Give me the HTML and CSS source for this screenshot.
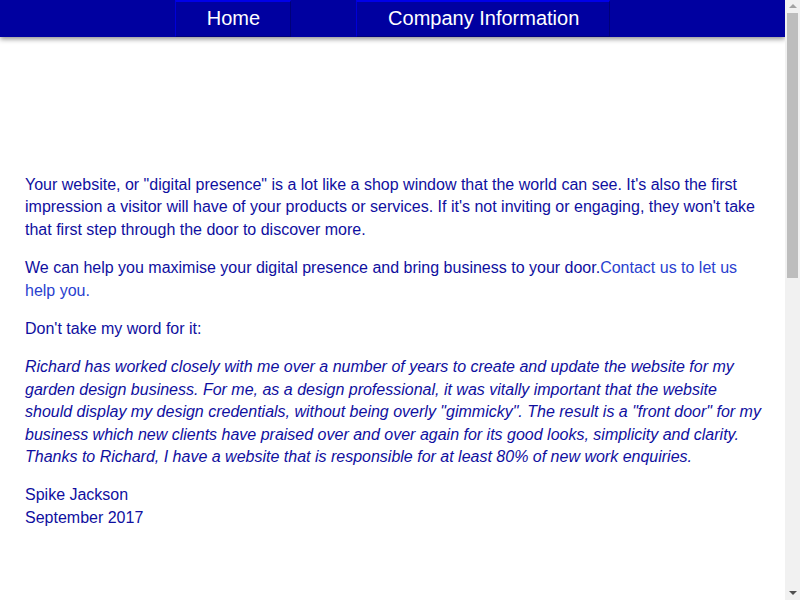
FILE: index.html
```html
<!DOCTYPE html>
<html lang="en">
<head>
<meta charset="utf-8">
<title>Digital presence</title>
<link rel="stylesheet" href="styles.css">
</head>
<body>
<header class="site-header">
  <nav class="nav">
    <a class="nav-item" href="#">Home</a>
    <a class="nav-item" href="#">Company Information</a>
  </nav>
</header>
<main class="content">
  <p>Your website, or "digital presence" is a lot like a shop window that the world can see. It's also the first impression a visitor will have of your products or services. If it's not inviting or engaging, they won't take that first step through the door to discover more.</p>
  <p>We can help you maximise your digital presence and bring business to your door.<a class="link" href="#">Contact us to let us help you.</a></p>
  <p>Don't take my word for it:</p>
  <p class="quote">Richard has worked closely with me over a number of years to create and update the website for my garden design business. For me, as a design professional, it was vitally important that the website should display my design credentials, without being overly "gimmicky". The result is a "front door" for my business which new clients have praised over and over again for its good looks, simplicity and clarity. Thanks to Richard, I have a website that is responsible for at least 80% of new work enquiries.</p>
  <p>Spike Jackson<br>September 2017</p>
</main>
<div class="scrollbar" aria-hidden="true">
  <span class="sb-arrow sb-up"></span>
  <span class="sb-track"><span class="sb-thumb"></span></span>
  <span class="sb-arrow sb-down"></span>
</div>
</body>
</html>
```
FILE: styles.css
```css
html, body {
  padding: 0;
  background: #ffffff;
}

html {
  margin: 0;
}

body {
  margin: 0 15px 0 0;
  font-family: "Liberation Sans", Arial, sans-serif;
  font-size: 16px;
  line-height: 1.4;
  color: #0f0fa0;
}

.site-header {
  height: 37px;
  background: #0000a0;
  box-shadow: 0 2px 5px rgba(0, 0, 0, 0.45);
  position: relative;
  z-index: 1;
}

.nav {
  display: flex;
  justify-content: center;
  height: 37px;
  gap: 65px;
}

.nav-item {
  display: flex;
  align-items: center;
  box-sizing: border-box;
  height: 37px;
  padding: 0 30px 2px 31px;
  color: #ffffff;
  font-size: 20px;
  line-height: 22px;
  text-decoration: none;
  background: #0000a0;
  border-top: 2px solid #0000e8;
  border-left: 1px solid #0000d8;
  border-right: 1px solid #000078;
  border-bottom: 1px solid #000080;
}

.content {
  box-sizing: border-box;
  min-height: 1253px;
  padding: 137px 22px 0 25px;
}

.content p {
  margin: 0 0 16px;
}

.quote {
  font-style: italic;
}

.link {
  color: #2a3fcf;
  text-decoration: none;
}

/* simulated classic browser scrollbar */
.scrollbar {
  position: fixed;
  top: 0;
  right: 0;
  bottom: 0;
  width: 15px;
  background: #f1f1f1;
  display: flex;
  flex-direction: column;
  z-index: 2;
}

.sb-arrow {
  height: 13px;
  flex: none;
  display: flex;
  justify-content: center;
  align-items: center;
}

.sb-arrow::before {
  content: "";
  width: 0;
  height: 0;
  border-left: 4px solid transparent;
  border-right: 4px solid transparent;
}

.sb-up::before {
  border-bottom: 4px solid #a3a3a3;
  margin-top: -2px;
}

.sb-down {
  height: 15px;
}

.sb-down::before {
  border-top: 4px solid #505050;
}

.sb-track {
  flex: 1;
  display: flex;
  flex-direction: column;
  padding: 0 2px;
}

.sb-thumb {
  height: 265px;
  background: #bdbdbd;
}
```
